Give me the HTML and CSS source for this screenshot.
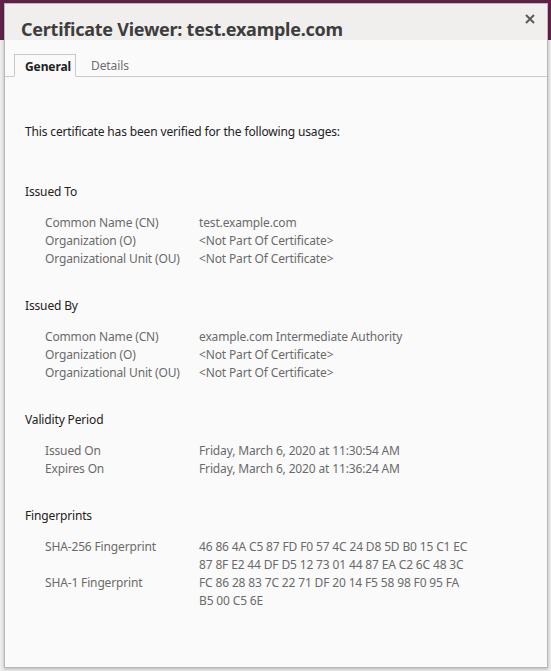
FILE: index.html
```html
<!DOCTYPE html>
<html lang="en">
<head>
<meta charset="utf-8">
<title>Certificate Viewer</title>
<link rel="stylesheet" href="styles.css">
</head>
<body>
<div class="dialog">
  <header class="titlebar">
    <h1 class="title">Certificate Viewer: test.example.com</h1>
    <button class="close" aria-label="Close">
      <svg width="10" height="10" viewBox="0 0 10 10"><path d="M1 1 L9 9 M9 1 L1 9" stroke="#5b5b5b" stroke-width="2" fill="none"/></svg>
    </button>
  </header>
  <div class="body">
    <nav class="tabs">
      <span class="tab active">General</span>
      <span class="tab">Details</span>
      <span class="tab-fill"></span>
    </nav>
    <main class="content">
      <p class="intro">This certificate has been verified for the following usages:</p>

      <section class="section">
        <h2>Issued To</h2>
        <div class="rows">
          <span class="label">Common Name (CN)</span><span class="value">test.example.com</span>
          <span class="label">Organization (O)</span><span class="value">&lt;Not Part Of Certificate&gt;</span>
          <span class="label">Organizational Unit (OU)</span><span class="value">&lt;Not Part Of Certificate&gt;</span>
        </div>
      </section>

      <section class="section">
        <h2>Issued By</h2>
        <div class="rows">
          <span class="label">Common Name (CN)</span><span class="value">example.com Intermediate Authority</span>
          <span class="label">Organization (O)</span><span class="value">&lt;Not Part Of Certificate&gt;</span>
          <span class="label">Organizational Unit (OU)</span><span class="value">&lt;Not Part Of Certificate&gt;</span>
        </div>
      </section>

      <section class="section">
        <h2>Validity Period</h2>
        <div class="rows">
          <span class="label">Issued On</span><span class="value">Friday, March 6, 2020 at 11:30:54 AM</span>
          <span class="label">Expires On</span><span class="value">Friday, March 6, 2020 at 11:36:24 AM</span>
        </div>
      </section>

      <section class="section">
        <h2>Fingerprints</h2>
        <div class="rows">
          <span class="label">SHA-256 Fingerprint</span><span class="value">46 86 4A C5 87 FD F0 57 4C 24 D8 5D B0 15 C1 EC<br>87 8F E2 44 DF D5 12 73 01 44 87 EA C2 6C 48 3C</span>
          <span class="label">SHA-1 Fingerprint</span><span class="value">FC 86 28 83 7C 22 71 DF 20 14 F5 58 98 F0 95 FA<br>B5 00 C5 6E</span>
        </div>
      </section>
    </main>
  </div>
</div>
</body>
</html>
```

FILE: styles.css
```css
* { box-sizing: border-box; }

html, body {
  margin: 0;
  height: 100%;
}

body {
  padding: 3px 3px 3px 4px;
  background: linear-gradient(#63214a 0, #63214a 40px, #ededed 40px);
  font-family: "Noto Sans", "Open Sans", sans-serif;
  font-size: 12px;
  line-height: 18px;
  overflow: hidden;
}

.dialog {
  width: 544px;
  height: 665px;
  border: 1px solid #b9b9b9;
  background: #fafafa;
  display: flex;
  flex-direction: column;
  box-shadow: 0 1px 3px rgba(0,0,0,0.25);
}

.titlebar {
  height: 36px;
  flex: none;
  background: #f0efed;
  display: flex;
  align-items: flex-end;
  justify-content: space-between;
  padding: 0 12px 0 16px;
}

.title {
  margin: 0;
  font-size: 18px;
  font-weight: 700;
  color: #3d3d3d;
  line-height: 22px;
  letter-spacing: -0.25px;
}

.close {
  border: 0;
  background: none;
  padding: 0;
  align-self: flex-start;
  margin-top: 10px;
  width: 10px;
  height: 10px;
  display: flex;
}

.body {
  flex: 1;
  display: flex;
  flex-direction: column;
}

.tabs {
  display: flex;
  margin-top: 14px;
  height: 23px;
}

.tabs::before {
  content: "";
  width: 9px;
  border-bottom: 1px solid #c9c9c9;
}

.tab {
  padding: 0 12px 0 15px;
  line-height: 23px;
  color: #6e6e6e;
  border-bottom: 1px solid #c9c9c9;
  letter-spacing: -0.1px;
}

.tab.active {
  width: 62px;
  padding: 0 0 0 10px;
  color: #222;
  font-weight: 700;
  border: 1px solid #c9c9c9;
  border-bottom-color: transparent;
  background: #fafafa;
}

.tab-fill {
  flex: 1;
  border-bottom: 1px solid #c9c9c9;
}

.content {
  padding: 46px 20px 0 20px;
  letter-spacing: -0.15px;
}

.intro {
  margin: 0 0 42px;
  color: #222;
}

.section {
  margin-bottom: 29px;
}

.section h2 {
  margin: 0 0 13px;
  font-size: 12px;
  font-weight: 400;
  color: #222;
}

.rows {
  display: grid;
  grid-template-columns: 154px 1fr;
  padding-left: 20px;
  color: #6a6a6a;
}
```
